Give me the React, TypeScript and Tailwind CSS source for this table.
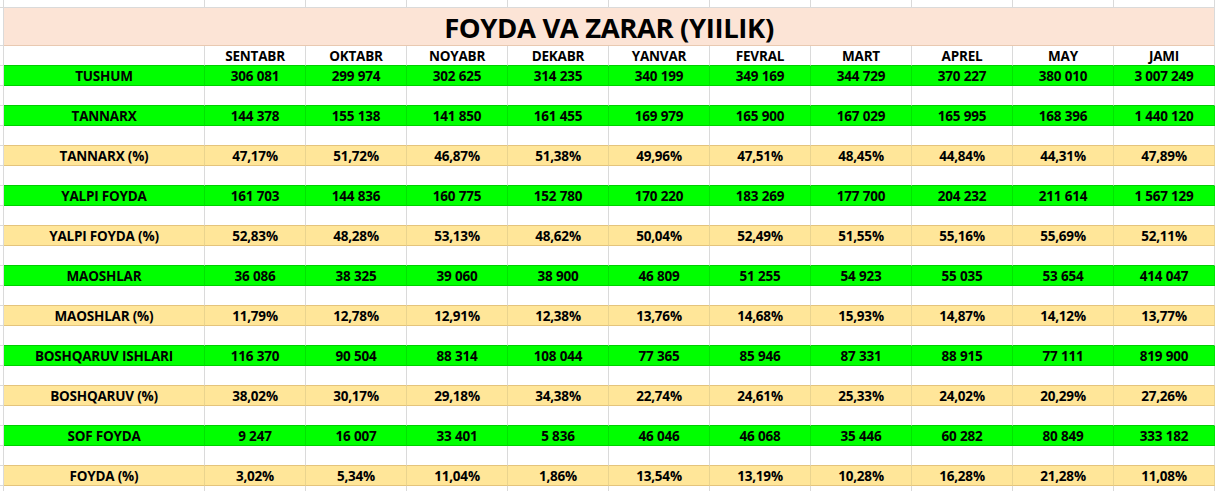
const months = ["SENTABR", "OKTABR", "NOYABR", "DEKABR", "YANVAR", "FEVRAL", "MART", "APREL", "MAY", "JAMI"];

type Kind = "g" | "y" | "b" | "h";

type Row = {
    label: string;
    values: string[];
    kind: Kind;
};

const data: Row[] = [
    { label: "TUSHUM", kind: "g", values: ["306 081", "299 974", "302 625", "314 235", "340 199", "349 169", "344 729", "370 227", "380 010", "3 007 249"] },
    { label: "TANNARX", kind: "g", values: ["144 378", "155 138", "141 850", "161 455", "169 979", "165 900", "167 029", "165 995", "168 396", "1 440 120"] },
    { label: "TANNARX (%)", kind: "y", values: ["47,17%", "51,72%", "46,87%", "51,38%", "49,96%", "47,51%", "48,45%", "44,84%", "44,31%", "47,89%"] },
    { label: "YALPI FOYDA", kind: "g", values: ["161 703", "144 836", "160 775", "152 780", "170 220", "183 269", "177 700", "204 232", "211 614", "1 567 129"] },
    { label: "YALPI FOYDA (%)", kind: "y", values: ["52,83%", "48,28%", "53,13%", "48,62%", "50,04%", "52,49%", "51,55%", "55,16%", "55,69%", "52,11%"] },
    { label: "MAOSHLAR", kind: "g", values: ["36 086", "38 325", "39 060", "38 900", "46 809", "51 255", "54 923", "55 035", "53 654", "414 047"] },
    { label: "MAOSHLAR (%)", kind: "y", values: ["11,79%", "12,78%", "12,91%", "12,38%", "13,76%", "14,68%", "15,93%", "14,87%", "14,12%", "13,77%"] },
    { label: "BOSHQARUV ISHLARI", kind: "g", values: ["116 370", "90 504", "88 314", "108 044", "77 365", "85 946", "87 331", "88 915", "77 111", "819 900"] },
    { label: "BOSHQARUV (%)", kind: "y", values: ["38,02%", "30,17%", "29,18%", "34,38%", "22,74%", "24,61%", "25,33%", "24,02%", "20,29%", "27,26%"] },
    { label: "SOF FOYDA", kind: "g", values: ["9 247", "16 007", "33 401", "5 836", "46 046", "46 068", "35 446", "60 282", "80 849", "333 182"] },
    { label: "FOYDA (%)", kind: "y", values: ["3,02%", "5,34%", "11,04%", "1,86%", "13,54%", "13,19%", "10,28%", "16,28%", "21,28%", "11,08%"] },
];

// header, then each data row followed by an empty spreadsheet row
const rows: Row[] = [{ label: "", values: months, kind: "h" }];
data.forEach((r) => {
    rows.push(r);
    rows.push({ label: "", values: Array(10).fill(""), kind: "b" });
});

const fill: Record<Kind, string> = {
    g: "bg-[#00ff00] border-r-[#00e400]",
    y: "bg-[#ffe699] border-r-[#ead48e]",
    b: "bg-white border-r-[#dadada]",
    h: "bg-white border-r-[#dadada]",
};

const bottom: Record<Kind, string> = {
    g: "border-b-[#00cf00]",
    y: "border-b-[#e4c47c]",
    b: "border-b-[#dadada]",
    h: "border-b-[#dadada]",
};

const Sliver = ({ h, b }: { h: string; b: string }) => (
    <div className={`w-[4px] shrink-0 border-r border-b border-r-[#dadada] ${b} ${h}`} />
);

const SheetRow = ({ row, next }: { row: Row; next?: Row }) => {
    // the line under a row takes the colour of whichever neighbour is coloured
    let b = bottom[row.kind];
    if ((row.kind === "b" || row.kind === "h") && next && (next.kind === "g" || next.kind === "y")) {
        b = bottom[next.kind];
    }
    const cell = `h-[20px] shrink-0 flex items-center justify-center pt-[2px] border-r border-b ${fill[row.kind]} ${b}`;
    return (
        <div className="flex">
            <Sliver h="h-[20px]" b="border-b-[#dadada]" />
            <div className={`${cell} w-[201px]`}>{row.label}</div>
            {row.values.map((v, i) => (
                <div key={i} className={`${cell} w-[101px]`}>
                    {v}
                </div>
            ))}
        </div>
    );
};

const App = () => {
    return (
        <main
            className="w-[1219px] h-[491px] overflow-hidden bg-white text-black font-bold text-[13.5px] leading-[17px] tracking-[-0.2px]"
            style={{ fontFamily: "'Open Sans', Lato, sans-serif" }}
        >
            <div className="flex">
                <Sliver h="h-[8px]" b="border-b-[#dadada]" />
                <div className="h-[8px] w-[201px] shrink-0 border-r border-b border-[#dadada]" />
                {months.map((m) => (
                    <div key={m} className="h-[8px] w-[101px] shrink-0 border-r border-b border-[#dadada]" />
                ))}
            </div>
            <div className="flex">
                <Sliver h="h-[38px]" b="border-b-[#dadada]" />
                <div className="h-[38px] w-[1211px] shrink-0 flex items-center justify-center pt-[2px] bg-[#fce4d6] border-r border-b border-r-[#dadada] border-b-[#e9c9b1] text-[27.5px] leading-[33px] tracking-[-0.4px]">
                    FOYDA VA ZARAR (YIILIK)
                </div>
            </div>
            {rows.map((r, i) => (
                <SheetRow key={i} row={r} next={rows[i + 1]} />
            ))}
        </main>
    );
};

export default App;
